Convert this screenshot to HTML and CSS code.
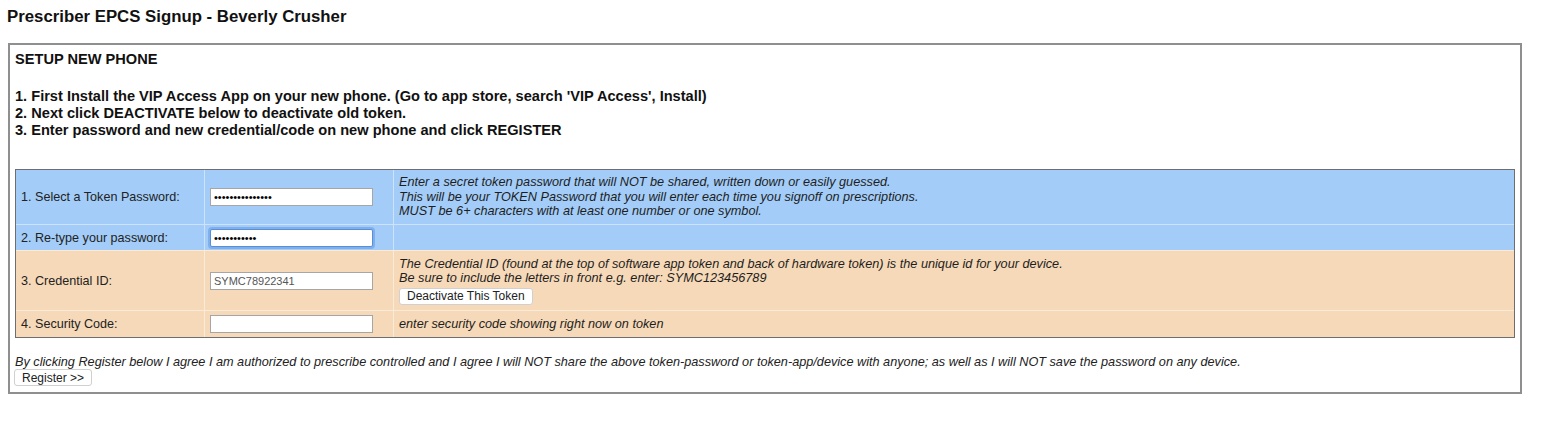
FILE: index.html
```html
<!DOCTYPE html>
<html lang="en">
<head>
    <meta charset="UTF-8">
    <title>Prescriber EPCS Signup</title>
    <link rel="stylesheet" href="styles.css">
</head>
<body>
    <h1>Prescriber EPCS Signup - Beverly Crusher</h1>
    <div class="box">
        <div class="setup-title">SETUP NEW PHONE</div>
        <div class="steps">
            1. First Install the VIP Access App on your new phone. (Go to app store, search 'VIP Access', Install)<br>
            2. Next click DEACTIVATE below to deactivate old token.<br>
            3. Enter password and new credential/code on new phone and click REGISTER
        </div>

        <table class="token-table">
            <tr class="blue row-first">
                <td class="label">1. Select a Token Password:</td>
                <td class="field"><input type="password" value="passwordpass123"></td>
                <td class="help">
                    Enter a secret token password that will NOT be shared, written down or easily guessed.<br>
                    This will be your TOKEN Password that you will enter each time you signoff on prescriptions.<br>
                    MUST be 6+ characters with at least one number or one symbol.
                </td>
            </tr>
            <tr class="blue">
                <td class="label">2. Re-type your password:</td>
                <td class="field"><input type="password" class="focused" value="password123"></td>
                <td class="help"></td>
            </tr>
            <tr class="peach row-third">
                <td class="label">3. Credential ID:</td>
                <td class="field"><input type="text" class="readonly" value="SYMC78922341"></td>
                <td class="help">
                    The Credential ID (found at the top of software app token and back of hardware token) is the unique id for your device.<br>
                    Be sure to include the letters in front e.g. enter: SYMC123456789<br>
                    <button type="button">Deactivate This Token</button>
                </td>
            </tr>
            <tr class="peach row-last">
                <td class="label">4. Security Code:</td>
                <td class="field"><input type="text"></td>
                <td class="help">enter security code showing right now on token</td>
            </tr>
        </table>

        <div class="agree">By clicking Register below I agree I am authorized to prescribe controlled and I agree I will NOT share the above token-password or token-app/device with anyone; as well as I will NOT save the password on any device.</div>
        <button type="button" class="register">Register &gt;&gt;</button>
    </div>
</body>
</html>
```

FILE: styles.css
```css
body {
    font-family: "Liberation Sans", Arial, sans-serif;
    color: #111;
    background: #fff;
    margin: 0;
    padding: 8px;
}
h1 {
    font-size: 16.8px;
    line-height: 18px;
    margin: 0 0 17px -1px;
}
.box {
    box-sizing: border-box;
    width: 1514px;
    border: 2px solid #8f8f8f;
    padding: 6px 5px 2px;
}
.setup-title {
    font-size: 14.6px;
    font-weight: bold;
    line-height: 17px;
}
.steps {
    font-size: 14.6px;
    font-weight: bold;
    line-height: 17px;
    margin-top: 20px;
}
.token-table {
    width: 100%;
    margin-top: 30px;
    border-collapse: separate;
    border-spacing: 0;
    border: 1px solid #6e6e6e;
}
.token-table td {
    font-size: 12.6px;
    color: #222;
    padding: 0 5px;
    height: 25px;
    border-left: 1px solid rgba(255, 255, 255, 0.45);
    border-top: 1px solid rgba(255, 255, 255, 0.45);
}
.token-table tr:first-child td {
    border-top: none;
}
.token-table td:first-child {
    border-left: none;
}
.token-table .row-first td {
    height: 54px;
}
.token-table .row-third td {
    height: 59px;
}
.token-table .row-last td {
    height: 26px;
}
.blue td {
    background: #a3cdf8;
}
.peach td {
    background: #f6d9b8;
}
td.label {
    width: 178px;
}
td.field {
    width: 178px;
}
td.help {
    font-style: italic;
    font-size: 12.7px;
    line-height: 14.5px;
    color: #1e1e1e;
}
input {
    box-sizing: border-box;
    width: 163px;
    height: 18px;
    border: 1px solid #a6a6a6;
    padding: 1px 3px;
    font-family: "Liberation Sans", Arial, sans-serif;
    font-size: 11px;
    background: #fff;
    outline: none;
}
input.focused {
    border-color: #5a8fd8;
    box-shadow: 0 0 0 2px #7fb0ee;
    border-radius: 2px;
}
input.readonly {
    color: #555;
}
button {
    font-family: "Liberation Sans", Arial, sans-serif;
    font-size: 12px;
    color: #222;
    background: #fff;
    border: 1px solid #d0d0d0;
    border-radius: 3px;
    height: 17px;
    padding: 0 7px;
    margin-top: 2px;
    cursor: pointer;
}
.agree {
    font-style: italic;
    font-size: 12.7px;
    line-height: 15px;
    color: #222;
    margin-top: 17px;
}
.register {
    display: block;
    margin: -1px 0 4px -1px;
}
```
